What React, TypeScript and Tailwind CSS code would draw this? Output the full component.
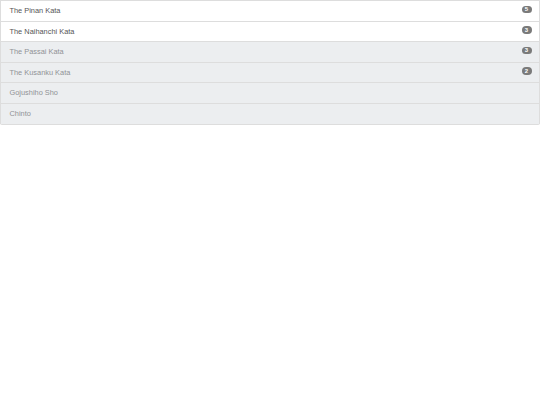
import React from "react";

const items: { name: string; badge?: string; disabled?: boolean }[] = [
  { name: "The Pinan Kata", badge: "5" },
  { name: "The Naihanchi Kata", badge: "3" },
  { name: "The Passai Kata", badge: "3", disabled: true },
  { name: "The Kusanku Kata", badge: "2", disabled: true },
  { name: "Gojushiho Sho", disabled: true },
  { name: "Chinto", disabled: true },
];

export default function App() {
  return (
    <div
      className="w-[540px] h-[405px] bg-white"
      style={{ fontFamily: '"Liberation Sans", Arial, sans-serif' }}
    >
      <div className="flex flex-col border-b border-[#ddd] rounded-[2px]">
        {items.map((it, i) => (
          <div
            key={i}
            className={
              it.disabled
                ? "flex items-center justify-between h-[20.6px] pl-[8.5px] pr-[7.5px] border-t border-x border-[#ddd] bg-[#eceef0] text-[#909296] text-[7.4px] leading-[10px]"
                : "flex items-center justify-between h-[20.6px] pl-[8.5px] pr-[7.5px] border-t border-x border-[#ddd] bg-white text-[#555] text-[7.4px] leading-[10px]"
            }
          >
            <span className="mt-[0.5px]">{it.name}</span>
            {it.badge && (
              <span className="mb-[3px] inline-flex items-center justify-center h-[7.5px] min-w-[10px] px-[2.5px] rounded-full bg-[#7a7a7a] text-white text-[6px] font-bold leading-none">
                {it.badge}
              </span>
            )}
          </div>
        ))}
      </div>
    </div>
  );
}
